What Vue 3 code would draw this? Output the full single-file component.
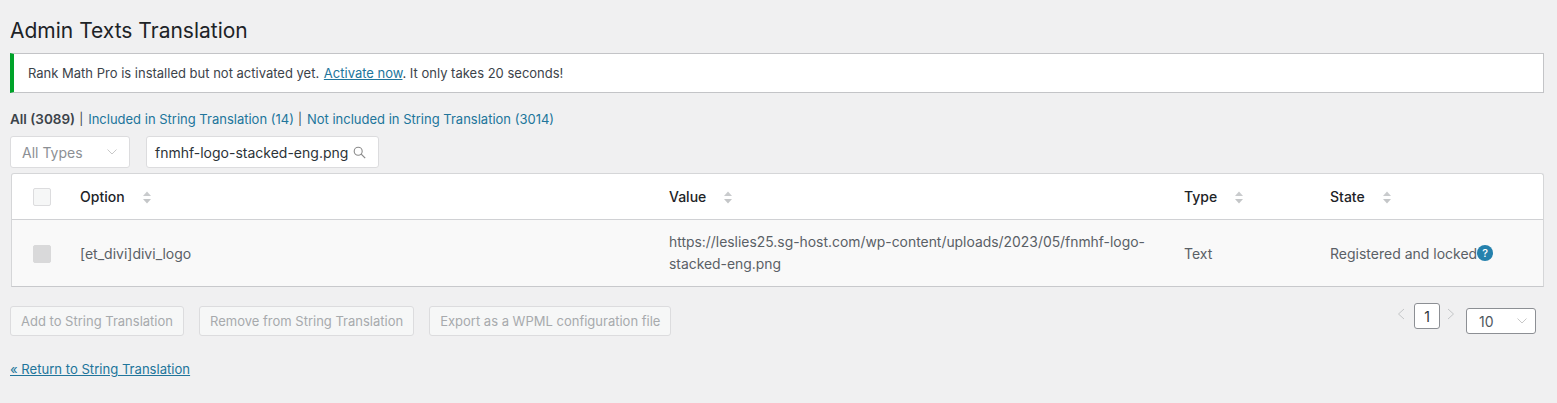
<script setup>
const cols = [
  { name: 'Option' },
  { name: 'Value' },
  { name: 'Type' },
  { name: 'State' }
]
const buttons = ['Add to String Translation', 'Remove from String Translation', 'Export as a WPML configuration file']
</script>

<template>
  <div class="wrap">
    <h1 class="title">Admin Texts Translation</h1>
    <div class="notice"><span>Rank Math Pro is installed but not activated yet. <a href="#">Activate now</a>. It only takes 20 seconds!</span></div>
    <div class="subsub">
      <strong>All (3089)</strong><span class="sep">|</span><span class="lnk">Included in String Translation (14)</span><span class="sep">|</span><span class="lnk">Not included in String Translation (3014)</span>
    </div>
    <div class="filters">
      <div class="select">
        <span>All Types</span>
        <svg width="10" height="6" viewBox="0 0 10 6"><path d="M0.500 0.500L5 5l4.500-4.500" fill="none" stroke="#c8c8c8" stroke-width="1"/></svg>
      </div>
      <div class="search">
        <span>fnmhf-logo-stacked-eng.png</span>
        <svg width="13" height="13" viewBox="0 0 13 13"><circle cx="5.2" cy="5.2" r="4" fill="none" stroke="#8a8a8a" stroke-width="1.1"/><path d="M8.2 8.2l4 4" stroke="#8a8a8a" stroke-width="1.2"/></svg>
      </div>
    </div>
    <div class="table">
      <div class="row head">
        <div class="check"><span class="box"></span></div>
        <div v-for="c in cols" :key="c.name" class="cell" :class="'col-' + c.name.toLowerCase()">
          <span>{{ c.name }}</span>
          <svg class="sort" width="8" height="13" viewBox="0 0 8 13"><path d="M4 0.500L8 5H0z" fill="#c9cbcd"/><path d="M4 12.500L8 8H0z" fill="#c4c6c8"/></svg>
        </div>
      </div>
      <div class="row body">
        <div class="check"><span class="box off"></span></div>
        <div class="cell col-option">[et_divi]divi_logo</div>
        <div class="cell col-value">https://leslies25.sg-host.com/wp-content/uploads/2023/05/fnmhf-logo-<br>stacked-eng.png</div>
        <div class="cell col-type">Text</div>
        <div class="cell col-state">Registered and locked<span class="help">?</span></div>
      </div>
    </div>
    <div class="actions">
      <div class="buttons">
        <span v-for="b in buttons" :key="b" class="btn">{{ b }}</span>
      </div>
      <div class="pager">
        <svg class="chev" width="8" height="12" viewBox="0 0 8 12"><path d="M7 1L1.500 6 7 11" fill="none" stroke="#c4c6c8" stroke-width="1"/></svg>
        <span class="page">1</span>
        <svg class="chev" width="8" height="12" viewBox="0 0 8 12"><path d="M1 1l5.500 5L1 11" fill="none" stroke="#c4c6c8" stroke-width="1"/></svg>
        <div class="size">
          <span>10</span>
          <svg width="10" height="6" viewBox="0 0 10 6"><path d="M0.500 0.500L5 5l4.500-4.500" fill="none" stroke="#c8c8c8" stroke-width="1"/></svg>
        </div>
      </div>
    </div>
    <a class="back" href="#">« Return to String Translation</a>
  </div>
</template>

<style scoped>
.wrap {
  box-sizing: border-box;
  width: 1557px;
  height: 403px;
  padding: 17px 13px 0 10px;
  background: #f0f0f1;
  font-family: Inter, "Liberation Sans", sans-serif;
  font-size: 13px;
  color: #50575e;
  overflow: hidden;
}
.title {
  margin: 0;
  font-size: 21px;
  line-height: 28px;
  font-weight: 400;
  color: #1d2327;
}
.notice {
  box-sizing: border-box;
  height: 40px;
  margin-top: 8px;
  padding-left: 14px;
  display: flex;
  align-items: center;
  background: #fff;
  border: 1px solid #c3c4c7;
  border-left: 4px solid #00a32a;
  color: #3c434a;
}
.notice a { color: #21759b; margin-left: 1px; }
.subsub {
  margin-top: 17px;
  height: 18px;
  line-height: 18px;
  display: flex;
  align-items: center;
}
.subsub strong { font-weight: 600; color: #3c434a; font-size: 13.500px; }
.sep { margin: 0 5px 0 4px; color: #3c434a; font-size: 12px; }
.lnk { color: #21759b; }
.filters {
  margin-top: 8px;
  display: flex;
  gap: 16px;
}
.select, .search {
  box-sizing: border-box;
  height: 32px;
  display: flex;
  align-items: center;
  background: #fff;
  border: 1px solid #dcdcde;
  border-radius: 3px;
  font-size: 14px;
}
.select {
  width: 120px;
  padding: 0 12px 0 11px;
  justify-content: space-between;
  color: #8c8f94;
}
.search {
  width: 233px;
  padding: 0 12px 0 8px;
  justify-content: space-between;
  color: #2c3338;
}
.table {
  box-sizing: border-box;
  margin: 5px 0 0 1px;
  background: #fff;
  border: 1px solid #d5d6d8;
  border-bottom-color: #c8c9cc;
  border-radius: 3px 3px 0 0;
  font-size: 14px;
}
.row { display: flex; align-items: center; }
.head { height: 45px; border-bottom: 1px solid #d0d1d4; color: #1d2327; font-weight: 500; }
.body { height: 66px; background: #f9f9f9; color: #5a6066; }
.check { width: 68px; padding-left: 21px; box-sizing: border-box; display: flex; }
.box {
  width: 18px;
  height: 18px;
  box-sizing: border-box;
  background: #f6f7f7;
  border: 1px solid #dcdcde;
  border-radius: 2px;
}
.box.off { background: #d9d9da; border-color: #d9d9da; margin-top: 1px; }
.cell { display: flex; align-items: center; box-sizing: border-box; }
.body .col-value { display: block; line-height: 22px; font-size: 13.900px; }
.col-option { width: 589px; }
.col-value { width: 515px; }
.col-type { width: 146px; }
.col-state { flex: 1; }
.sort { margin-left: 18px; margin-top: 2px; }
.help {
  width: 16px;
  height: 16px;
  border-radius: 50%;
  background: #2581ad;
  color: #fff;
  font-size: 11px;
  font-weight: 500;
  line-height: 16px;
  text-align: center;
}
.actions {
  margin-top: 19px;
  display: flex;
  justify-content: space-between;
  align-items: flex-start;
  padding-right: 8px;
}
.buttons { display: flex; gap: 15px; }
.btn {
  box-sizing: border-box;
  height: 30px;
  padding: 0 10px;
  display: flex;
  align-items: center;
  border: 1px solid #dcdcde;
  border-radius: 3px;
  background: #f6f7f7;
  color: #a7aaad;
  font-size: 13px;
}
.pager { display: flex; align-items: flex-start; }
.chev { margin-top: 2px; }
.page {
  box-sizing: border-box;
  width: 26px;
  height: 26px;
  margin: -3px 7px 0 9px;
  display: flex;
  align-items: center;
  justify-content: center;
  background: #fff;
  border: 1px solid #8c8f94;
  border-radius: 3px;
  color: #2c3338;
  font-size: 14px;
}
.size {
  box-sizing: border-box;
  width: 70px;
  height: 26px;
  margin: 2px 0 0 11px;
  padding: 0 8px 0 12px;
  display: flex;
  align-items: center;
  justify-content: space-between;
  background: #fff;
  border: 1px solid #8c8f94;
  border-radius: 3px;
  font-size: 14px;
  color: #50575e;
}
.back {
  display: block;
  width: fit-content;
  margin-top: 25px;
  color: #21759b;
  line-height: 16px;
  font-size: 13.100px;
}
</style>

<style>
body { margin: 0; background: #f0f0f1; }
</style>
